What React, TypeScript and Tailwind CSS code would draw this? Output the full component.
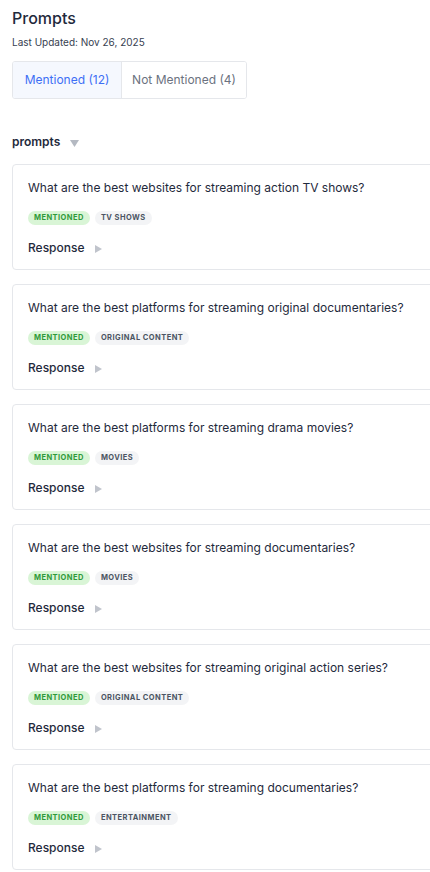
import { useState } from "react";

interface Prompt {
  question: string;
  tag: string;
}

const prompts: Prompt[] = [
  { question: "What are the best websites for streaming action TV shows?", tag: "TV Shows" },
  { question: "What are the best platforms for streaming original documentaries?", tag: "Original Content" },
  { question: "What are the best platforms for streaming drama movies?", tag: "Movies" },
  { question: "What are the best websites for streaming documentaries?", tag: "Movies" },
  { question: "What are the best websites for streaming original action series?", tag: "Original Content" },
  { question: "What are the best platforms for streaming documentaries?", tag: "Entertainment" },
];

const PromptCard = ({ prompt }: { prompt: Prompt }) => {
  return (
    <div className="w-[440px] shrink-0 rounded-[4px] border border-[#e5e7eb] bg-white pl-[15px] pt-[15px] pb-[13px]">
      <p className="text-[12px] leading-[16px] text-[#1f2a3c]">{prompt.question}</p>
      <div className="mt-[15px] flex items-center gap-[5px]">
        <span className="rounded-full bg-[#d9f5d6] px-[6px] py-[3px] text-[7.5px] font-bold leading-[8px] tracking-[0.06em] text-[#2f9a3a] uppercase">
          Mentioned
        </span>
        <span className="rounded-full bg-[#f3f4f6] px-[6px] py-[3px] text-[7.5px] font-bold leading-[8px] tracking-[0.06em] text-[#4b5563] uppercase">
          {prompt.tag}
        </span>
      </div>
      <div className="mt-[15px] flex items-center gap-[10px]">
        <span className="text-[12px] font-medium leading-[16px] text-[#1f2a3c]">Response</span>
        <svg width="7" height="8" viewBox="0 0 7 8" className="mt-[1px]">
          <path d="M0 0 L7 4 L0 8 Z" fill="#c0c4cc" />
        </svg>
      </div>
    </div>
  );
};

export default function App() {
  const [tab, setTab] = useState<"mentioned" | "not">("mentioned");

  return (
    <div
      className="min-h-[872px] w-[430px] overflow-hidden bg-white px-3 pt-[7px]"
      style={{ fontFamily: "Inter, 'Noto Sans', sans-serif" }}
    >
      <h1 className="text-[16px] leading-[22px] font-medium text-[#1f2a3c]">Prompts</h1>
      <p className="mt-[6px] text-[10px] leading-[14px] text-[#374151]">Last Updated: Nov 26, 2025</p>

      <div className="mt-[12px] flex w-[235px] overflow-hidden rounded-[3px] border border-[#e5e7eb]">
        <button
          onClick={() => setTab("mentioned")}
          className={`h-[36px] w-[109px] border-r border-[#e5e7eb] text-[12px] ${
            tab === "mentioned" ? "bg-[#f5f8fe] text-[#3d6ff5]" : "bg-white text-[#6b7280]"
          }`}
        >
          Mentioned (12)
        </button>
        <button
          onClick={() => setTab("not")}
          className={`h-[36px] flex-1 text-[12px] ${
            tab === "not" ? "bg-[#f5f8fe] text-[#3d6ff5]" : "bg-white text-[#6b7280]"
          }`}
        >
          Not Mentioned (4)
        </button>
      </div>

      <div className="mt-[35px] flex items-center gap-[10px]">
        <span className="text-[12px] font-semibold leading-[16px] text-[#1f2a3c]">prompts</span>
        <svg width="9" height="7" viewBox="0 0 9 7" className="mt-[2px]">
          <path d="M0 0 L9 0 L4.5 7 Z" fill="#b4b9c2" />
        </svg>
      </div>

      <div className="mt-[14px] flex flex-col gap-[14px]">
        {prompts.map((p, i) => (
          <PromptCard key={i} prompt={p} />
        ))}
      </div>
    </div>
  );
}
